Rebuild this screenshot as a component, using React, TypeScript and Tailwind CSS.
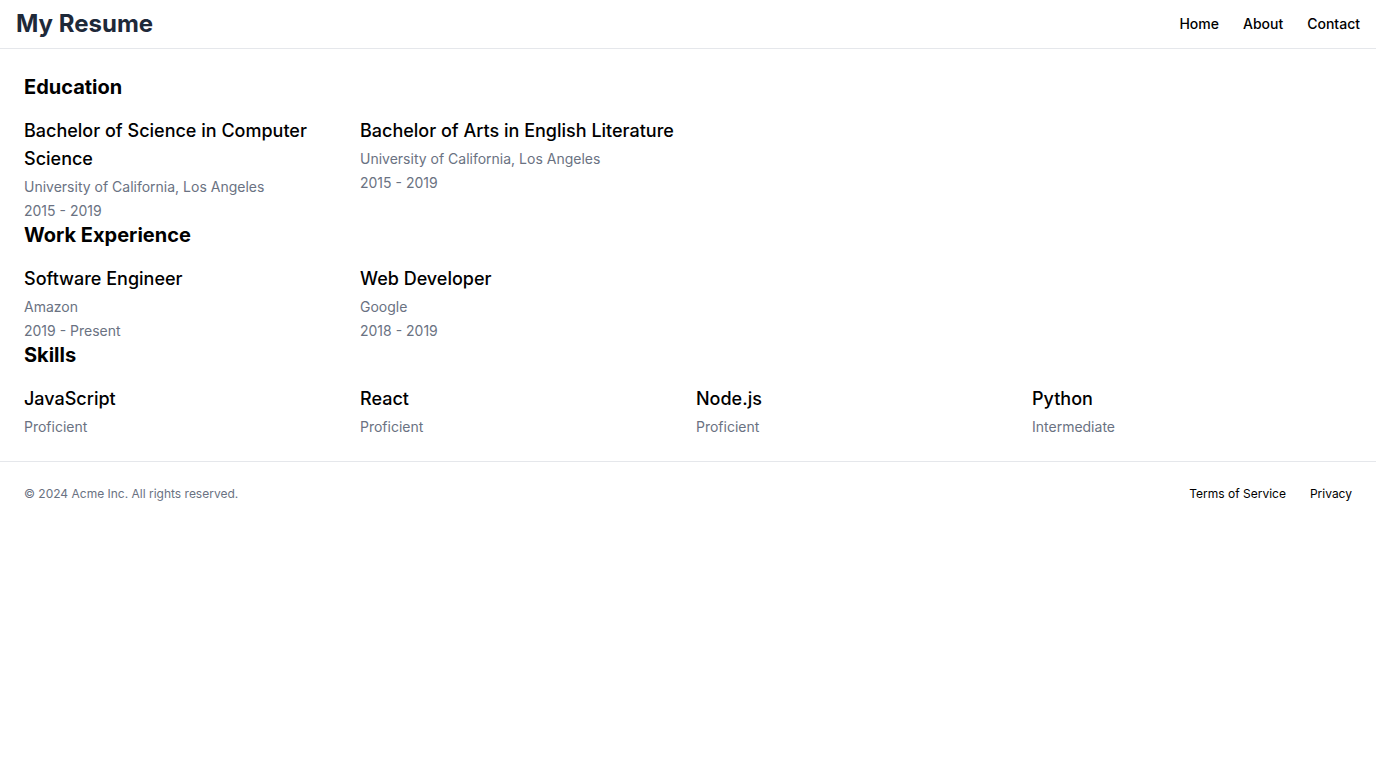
import React from 'react';

const education = [
  { title: 'Bachelor of Science in Computer Science', place: 'University of California, Los Angeles', years: '2015 - 2019' },
  { title: 'Bachelor of Arts in English Literature', place: 'University of California, Los Angeles', years: '2015 - 2019' },
];

const work = [
  { title: 'Software Engineer', place: 'Amazon', years: '2019 - Present' },
  { title: 'Web Developer', place: 'Google', years: '2018 - 2019' },
];

const skills = [
  { title: 'JavaScript', level: 'Proficient' },
  { title: 'React', level: 'Proficient' },
  { title: 'Node.js', level: 'Proficient' },
  { title: 'Python', level: 'Intermediate' },
];

export default function App() {
  return (
    <div className="min-h-screen bg-white text-black" style={{ fontFamily: 'Inter, "Liberation Sans", sans-serif' }}>
      {/* header */}
      <header className="flex items-center justify-between px-4 py-2 border-b border-gray-200">
        <h1 className="text-2xl font-bold text-gray-800">My Resume</h1>
        <nav className="flex gap-6 text-sm font-medium">
          <a href="#">Home</a>
          <a href="#">About</a>
          <a href="#">Contact</a>
        </nav>
      </header>

      <main className="px-6 py-6">
        <section>
          <h2 className="text-xl font-bold mb-4">Education</h2>
          <div className="grid grid-cols-4 gap-4">
            {education.map((e) => (
              <div key={e.title}>
                <h3 className="text-lg font-medium">{e.title}</h3>
                <p className="text-sm leading-5 pt-1 text-gray-500">{e.place}</p>
                <p className="text-sm leading-5 pt-1 text-gray-500">{e.years}</p>
              </div>
            ))}
          </div>
        </section>
        <section>
          <h2 className="text-xl font-bold mb-4">Work Experience</h2>
          <div className="grid grid-cols-4 gap-4">
            {work.map((w) => (
              <div key={w.title}>
                <h3 className="text-lg font-medium">{w.title}</h3>
                <p className="text-sm leading-5 pt-1 text-gray-500">{w.place}</p>
                <p className="text-sm leading-5 pt-1 text-gray-500">{w.years}</p>
              </div>
            ))}
          </div>
        </section>
        <section>
          <h2 className="text-xl font-bold mb-4">Skills</h2>
          <div className="grid grid-cols-4 gap-4">
            {skills.map((s) => (
              <div key={s.title}>
                <h3 className="text-lg font-medium">{s.title}</h3>
                <p className="text-sm leading-5 pt-1 text-gray-500">{s.level}</p>
              </div>
            ))}
          </div>
        </section>
      </main>

      <footer className="flex items-center justify-between px-6 py-6 border-t border-gray-200 text-xs">
        <p className="text-gray-500">© 2024 Acme Inc. All rights reserved.</p>
        <nav className="flex gap-6">
          <a href="#">Terms of Service</a>
          <a href="#">Privacy</a>
        </nav>
      </footer>
    </div>
  );
}
